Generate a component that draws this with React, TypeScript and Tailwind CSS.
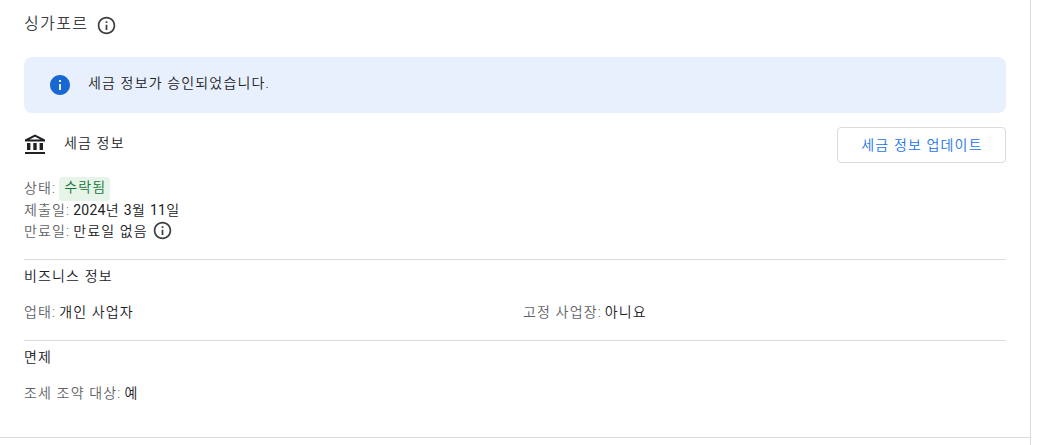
import type { ReactNode } from 'react';

function InfoIcon({ className }: { className: string }) {
  return (
    <svg viewBox="0 0 24 24" fill="currentColor" className={className}>
      <path d="M11 7h2v2h-2zm0 4h2v6h-2zm1-9C6.48 2 2 6.48 2 12s4.48 10 10 10 10-4.48 10-10S17.52 2 12 2zm0 18c-4.41 0-8-3.59-8-8s3.59-8 8-8 8 3.59 8 8-3.59 8-8 8z" />
    </svg>
  );
}

function InfoFilledIcon({ className }: { className: string }) {
  return (
    <svg viewBox="0 0 24 24" fill="currentColor" className={className}>
      <path d="M12 2C6.48 2 2 6.48 2 12s4.48 10 10 10 10-4.48 10-10S17.52 2 12 2zm1 15h-2v-6h2v6zm0-8h-2V7h2v2z" />
    </svg>
  );
}

function BankIcon({ className }: { className: string }) {
  return (
    <svg viewBox="0 0 24 24" fill="currentColor" className={className}>
      <path d="M4 10h3.4v7H4zM10.3 10h3.4v7h-3.4zM16.6 10H20v7h-3.4zM2 19h20v2H2zM12 1.6L2 6.4v2h20v-2L12 1.6zm0 2.26L17.5 6.5h-11L12 3.86z" />
    </svg>
  );
}

function Field({ label, children }: { label: string; children: ReactNode }) {
  return (
    <div className="flex h-[21px] items-center whitespace-nowrap">
      <span className="mr-[3px] text-[#5f6368]">{label}:</span>
      {children}
    </div>
  );
}

export default function App() {
  return (
    <div className="h-[445px] overflow-hidden bg-white font-['Roboto','Noto_Sans_CJK_KR',sans-serif] text-sm font-[350] tracking-[1.15px] text-[#202124]">
      <div className="h-full w-[1031px] border-r border-[#dadce0]">
        <section className="h-[438px] border-b border-[#dadce0] pr-6 pl-6">
          <div className="flex h-[57px] items-start pt-3">
            <h2 className="text-base leading-6 font-[350] tracking-[1.4px] text-[#3c4043]">싱가포르</h2>
            <InfoIcon className="mt-[2.5px] ml-[7.5px] size-[21px] text-[#3c4043]" />
          </div>

          <div className="flex h-14 items-center rounded-lg bg-[#e8f0fe] pl-6">
            <InfoFilledIcon className="size-6 text-[#1967d2]" />
            <span className="ml-4 -mt-[5px]">세금 정보가 승인되었습니다.</span>
          </div>

          <div className="mt-3.5 flex h-9 items-center">
            <BankIcon className="-ml-px size-6" />
            <h3 className="ml-[17px] -mt-[4px] font-[350]">세금 정보</h3>
            <button className="ml-auto h-9 w-[169px] rounded border border-[#dadce0] pl-px font-[350] text-[#1a73e8]">
              세금 정보 업데이트
            </button>
          </div>

          <div className="mt-3.5">
            <Field label="상태">
              <span className="mt-[2px] h-6 rounded bg-[#e6f4ea] pr-1 pl-[5px] leading-[21px] text-[#137333]">수락됨</span>
            </Field>
            <div className="mt-px">
              <Field label="제출일">
                <span className="font-normal tracking-[0.25px]">2024</span>
                <span className="tracking-[0.9px]">년&nbsp;</span>
                <span className="font-normal tracking-[0.25px]">3</span>
                <span className="tracking-[0.9px]">월&nbsp;</span>
                <span className="font-normal tracking-[0.25px]">11</span>
                일
              </Field>
            </div>
            <Field label="만료일">
              만료일 없음
              <InfoIcon className="ml-1 size-[21px] text-[#3c4043]" />
            </Field>
          </div>

          <div className="mt-[18px] h-[81px] border-t border-[#dadce0] pt-[5px]">
            <h3 className="h-[22px] leading-[22px] font-[350]">비즈니스 정보</h3>
            <div className="mt-3.5 grid grid-cols-[499px_1fr]">
              <Field label="업태">개인 사업자</Field>
              <Field label="고정 사업장">아니요</Field>
            </div>
          </div>

          <div className="border-t border-[#dadce0] pt-[5px]">
            <h3 className="h-[22px] leading-[22px] font-[350]">면제</h3>
            <div className="mt-3.5">
              <Field label="조세 조약 대상">예</Field>
            </div>
          </div>
        </section>
      </div>
    </div>
  );
}
